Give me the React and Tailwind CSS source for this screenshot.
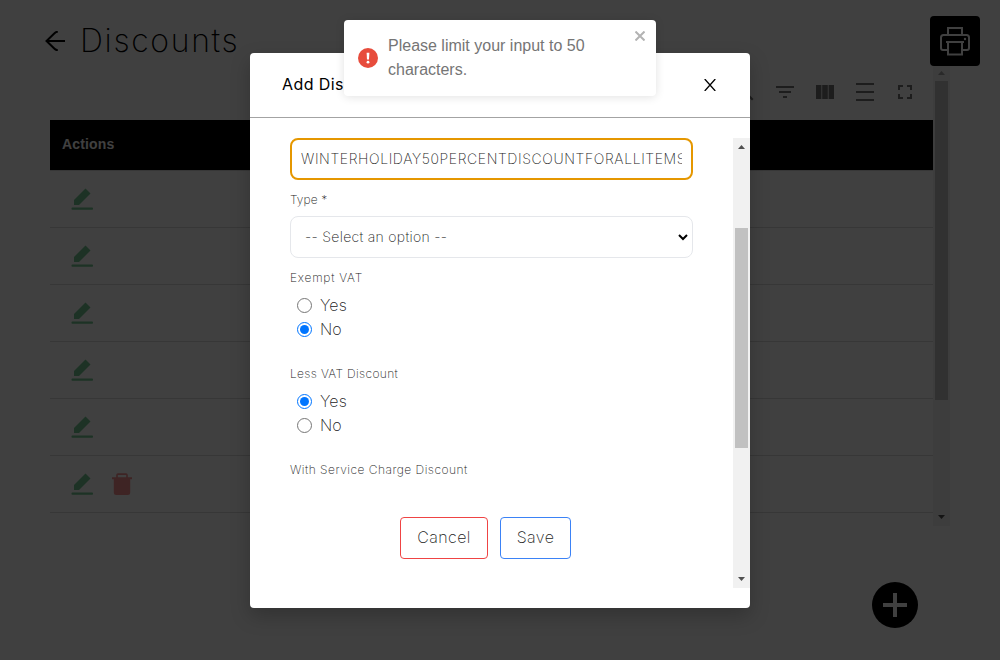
import { MdFilterList, MdFullscreen, MdDensityMedium, MdSearch } from "react-icons/md";

const rows = [false, false, false, false, false, true];

function EditIcon() {
  return (
    <svg className="h-6 w-6 fill-[#16a34a]/60" viewBox="0 0 24 24">
      <path d="M4 18V13L15.5 1.5L20.5 6.5L9 18Z" />
      <rect x="1.5" y="20.6" width="21.5" height="2.2" rx="0.8" />
    </svg>
  );
}

function TrashIcon() {
  return (
    <svg className="h-6 w-6 text-[#ef4444]/60" viewBox="0 0 24 24">
      <path
        fill="currentColor"
        fillRule="evenodd"
        d="M6.2 5.2V3Q6.2 1.2 8 1.2H16Q17.8 1.2 17.8 3V5.2H22V7.2H20.2V20.5Q20.2 23 17.7 23H6.3Q3.8 23 3.8 20.5V7.2H2V5.2ZM7.8 5.2H16.2V2.9H7.8Z"
      />
    </svg>
  );
}

function PrinterIcon() {
  return (
    <svg className="h-8 w-8" viewBox="0 0 32 32" fill="none" stroke="currentColor" strokeWidth="2">
      <path d="M9 10V3H23V10" />
      <path d="M8 25H4Q2 25 2 23V12.5Q2 10 4.500 10H27.500Q30 10 30 12.500V23Q30 25 28 25H24" />
      <path d="M9 17H23V29.500H9Z" />
      <path d="M7 17H25" />
      <circle cx="26" cy="14" r="1.2" fill="currentColor" stroke="none" />
    </svg>
  );
}

function Caret({ down, disabled }) {
  return (
    <svg className={disabled ? "h-[17px] w-[17px] shrink-0 fill-[#a3a3a3]" : "h-[17px] w-[17px] shrink-0 fill-[#505050]"} viewBox="0 0 17 17">
      {down ? <path d="M5 6h7L8.5 10z" /> : <path d="M5 11h7L8.5 7z" />}
    </svg>
  );
}

function Radio({ label, checked }) {
  return (
    <label className="flex h-6 items-center text-[16px] tracking-[0.1px]">
      <span
        className={
          checked
            ? "mr-2 flex h-[15px] w-[15px] items-center justify-center rounded-full border border-[#0075ff]"
            : "mr-2 flex h-[15px] w-[15px] rounded-full border border-[#767676]"
        }
      >
        {checked && <span className="h-[9px] w-[9px] rounded-full bg-[#0075ff]" />}
      </span>
      <span>{label}</span>
    </label>
  );
}

function Background() {
  return (
    <div className="h-full w-full bg-white pt-4">
      <header className="flex h-[50px] items-center pl-[45px] pr-5">
        <svg className="h-[20px] w-[20px]" viewBox="0 0 20 20" fill="none" stroke="black" strokeWidth="2">
          <path d="M20 10H1.5M12.8 .8Q11 .8 9.500 2.200L1.500 10L9.500 17.800Q11 19.200 12.800 19.200" />
        </svg>
        <h1 className="ml-[15px] text-[32px] font-extralight leading-none tracking-[1.65px] text-black">Discounts</h1>
        <button className="ml-auto flex h-[50px] w-[50px] items-center justify-center rounded bg-black text-white">
          <PrinterIcon />
        </button>
      </header>
      <div className="flex h-[460px] pl-[50px]">
        <div className="w-[883px]">
          <div className="flex h-[54px] items-center justify-end gap-4 pb-0.5 pr-4 text-[#757575]">
            <MdSearch size={24} />
            <MdFilterList size={24} />
            <svg className="h-6 w-6" viewBox="0 0 24 24" fill="currentColor">
              <path d="M3 5h5.4v14H3zM9.2 5h5.6v14H9.2zM15.6 5H21v14h-5.4z" />
            </svg>
            <MdDensityMedium size={24} />
            <MdFullscreen size={24} />
          </div>
          <div className="flex h-[51px] items-center border-b border-[#dcdcdc] bg-black pb-0.5 pl-3 font-['Liberation_Sans',sans-serif] text-[14px] font-bold tracking-[0.15px] text-white">
            Actions
          </div>
          {rows.map((trash, i) => (
            <div key={i} className="flex h-[57px] items-center gap-4 border-b border-[#dcdcdc] pl-5">
              <EditIcon />
              {trash && <TrashIcon />}
            </div>
          ))}
        </div>
        <div className="flex w-[17px] flex-col bg-[#f1f1f1]">
          <div className="-mt-0.5 flex"><Caret disabled /></div>
          <div className="mx-auto h-[319px] w-[13px] bg-[#c1c1c1]" />
          <div className="mt-auto"><Caret down /></div>
        </div>
      </div>
      <div className="flex justify-end pr-[82px] pt-[56px]">
        <button className="flex h-[46px] w-[46px] items-center justify-center rounded-full bg-black text-white">
          <svg className="h-6 w-6" viewBox="0 0 24 24" fill="currentColor"><path d="M10 0h4v10h10v4H14v10h-4V14H0v-4h10z" /></svg>
        </button>
      </div>
    </div>
  );
}

function Modal() {
  return (
    <section className="mt-[53px] flex h-[555px] w-[500px] flex-col rounded bg-white shadow-[0_8px_20px_rgba(0,0,0,0.22)]">
      <div className="flex h-[65px] items-center justify-between border-b border-[#a3a3a3] px-8">
        <h2 className="pb-0.5 text-[16px] font-normal tracking-[0.4px] text-black">Add Discount</h2>
        <svg className="mr-[2px] h-3 w-3" viewBox="0 0 12 12" stroke="black" strokeWidth="1.3"><path d="M.7 0L11.3 12M11.3 0L.7 12" /></svg>
      </div>
      <div className="mt-5 flex h-[450px]">
        <form className="flex w-[483px] flex-col px-10 text-[12px] font-extralight text-[#222]">
          <div className="flex h-[42px] items-center rounded-lg border-2 border-[#e59700] px-[9px]">
            <span className="overflow-hidden whitespace-nowrap pb-0.5 text-[14px] tracking-[0.62px]">
              WINTERHOLIDAY50PERCENTDISCOUNTFORALLITEMS
            </span>
          </div>
          <span className="mt-3 leading-4 tracking-[0.1px]">Type *</span>
          <div className="mt-2 flex h-[42px] items-center justify-between rounded-lg border border-[#e5e7eb] pl-[14px] pr-[4px]">
            <span className="pb-0.5 text-[14px] tracking-[0.3px]">-- Select an option --</span>
            <svg className="h-[7px] w-[10px]" viewBox="0 0 10 7" fill="none" stroke="black" strokeWidth="2"><path d="M1 1L5 5L9 1" /></svg>
          </div>
          <span className="mt-3 leading-4 tracking-[0.75px]">Exempt VAT</span>
          <div className="mt-[7px] pl-[7px]">
            <Radio label="Yes" />
            <Radio label="No" checked />
          </div>
          <span className="mt-[25px] leading-4 tracking-[0.35px]">Less VAT Discount</span>
          <div className="mt-[7px] pl-[7px]">
            <Radio label="Yes" checked />
            <Radio label="No" />
          </div>
          <span className="mt-[25px] leading-4 tracking-[0.48px]">With Service Charge Discount</span>
          <div className="mt-[39px] flex justify-center gap-3 pr-[12px] text-[16px] tracking-[0.4px]">
            <button type="button" className="h-[42px] w-[88px] rounded-[4px] border border-[#ef4444] pb-0.5">Cancel</button>
            <button type="button" className="h-[42px] w-[71px] rounded-[4px] border border-[#3b82f6] pb-0.5">Save</button>
          </div>
        </form>
        <div className="flex w-[17px] flex-col bg-[#f1f1f1]">
          <Caret />
          <div className="mx-auto mt-[73px] h-[220px] w-[13px] bg-[#c1c1c1]" />
          <div className="mt-auto"><Caret down /></div>
        </div>
      </div>
    </section>
  );
}

function Toast() {
  return (
    <div className="absolute left-[344px] top-5 flex h-[76px] w-[312px] items-center rounded bg-white pl-[14px] font-['Liberation_Sans',sans-serif] font-normal shadow-[0_1px_10px_rgba(0,0,0,0.12)]">
      <svg className="h-5 w-5 shrink-0" viewBox="0 0 20 20">
        <circle cx="10" cy="10" r="10" fill="#e74c3c" />
        <path d="M8.6 4.8h2.8l-.4 6.8H9z" fill="white" />
        <circle cx="10" cy="14.2" r="1.4" fill="white" />
      </svg>
      <p className="ml-[10px] w-[210px] text-[16px] leading-6 text-[#757575]">Please limit your input to 50 characters.</p>
      <svg className="absolute right-[11px] top-[11px] h-[10px] w-[10px]" viewBox="0 0 10 10" stroke="#b3b3b3" strokeWidth="2"><path d="M.5 .5L9.5 9.5M9.5 .5L.5 9.5" /></svg>
    </div>
  );
}

export default function App() {
  return (
    <main className="relative h-[660px] w-[1000px] overflow-hidden font-['Inter',sans-serif] font-light">
      <Background />
      <div className="absolute inset-0 flex items-start justify-center bg-black/75">
        <Modal />
      </div>
      <Toast />
    </main>
  );
}
